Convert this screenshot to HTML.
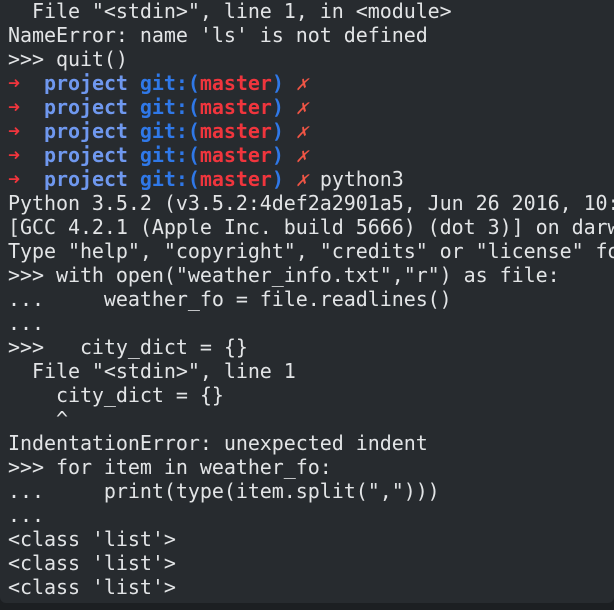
<!DOCTYPE html>
<html><head><style>
html,body{margin:0;padding:0;background:#1c1f22;}
.w{position:absolute;left:0;top:0;width:614px;height:603px;background:#272b2f;border-bottom-left-radius:6px;border-bottom-right-radius:6px;overflow:hidden;}
pre{margin:0;position:absolute;left:8px;top:-1px;font-family:"DejaVu Sans Mono","Liberation Mono",monospace;font-size:20px;line-height:24px;color:#e2e4e6;white-space:pre;letter-spacing:-0.05px;}
.r{color:#f0353d;font-weight:bold}
.a{color:#f0353d;font-weight:bold}
.p{color:#6f98ef;font-weight:bold}
.g{color:#2f78e8;font-weight:bold}
.x{color:#f05545;font-style:italic}
</style></head><body><div class="w"><pre>  File "&lt;stdin&gt;", line 1, in &lt;module&gt;
NameError: name 'ls' is not defined
&gt;&gt;&gt; quit()
<span class="a">➜</span>  <span class="p">project</span> <span class="g">git:(</span><span class="r">master</span><span class="g">)</span> <span class="x">✗</span>
<span class="a">➜</span>  <span class="p">project</span> <span class="g">git:(</span><span class="r">master</span><span class="g">)</span> <span class="x">✗</span>
<span class="a">➜</span>  <span class="p">project</span> <span class="g">git:(</span><span class="r">master</span><span class="g">)</span> <span class="x">✗</span>
<span class="a">➜</span>  <span class="p">project</span> <span class="g">git:(</span><span class="r">master</span><span class="g">)</span> <span class="x">✗</span>
<span class="a">➜</span>  <span class="p">project</span> <span class="g">git:(</span><span class="r">master</span><span class="g">)</span> <span class="x">✗</span> python3
Python 3.5.2 (v3.5.2:4def2a2901a5, Jun 26 2016, 10:47:25)
[GCC 4.2.1 (Apple Inc. build 5666) (dot 3)] on darwin
Type "help", "copyright", "credits" or "license" for more
&gt;&gt;&gt; with open("weather_info.txt","r") as file:
...     weather_fo = file.readlines()
...
&gt;&gt;&gt;   city_dict = {}
  File "&lt;stdin&gt;", line 1
    city_dict = {}
    ^
IndentationError: unexpected indent
&gt;&gt;&gt; for item in weather_fo:
...     print(type(item.split(",")))
...
&lt;class 'list'&gt;
&lt;class 'list'&gt;
&lt;class 'list'&gt;</pre></div></body></html>
